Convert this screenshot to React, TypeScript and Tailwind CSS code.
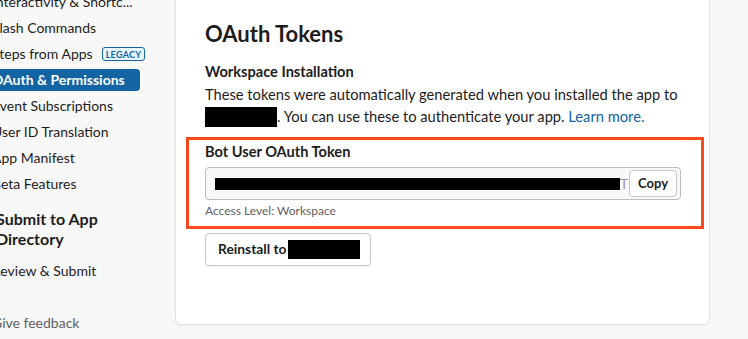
import React from 'react';

const navItems = [
  { label: 'Interactivity & Shortc...' },
  { label: 'Slash Commands' },
  { label: 'Steps from Apps', legacy: true },
  { label: 'OAuth & Permissions', active: true },
  { label: 'Event Subscriptions' },
  { label: 'User ID Translation' },
  { label: 'App Manifest' },
  { label: 'Beta Features' },
];

function Sidebar() {
  return (
    <nav className="w-[175px] shrink-0 -mt-[9px]">
      <div className="-ml-[20px] w-[160px]">
        {navItems.map((item) => (
          <div
            key={item.label}
            className={
              item.active
                ? 'mb-[4px] flex h-[22px] items-center whitespace-nowrap rounded-[4px] bg-[#1264a3] pl-[12px] text-[14px] font-bold leading-[22px] text-white'
                : 'mb-[4px] flex h-[22px] items-center whitespace-nowrap pl-[12px] text-[14px] leading-[22px]'
            }
          >
            <span>{item.label}</span>
            {item.legacy && (
              <span className="ml-[9px] flex h-[14px] items-center rounded-[3px] border border-[#1264a3] bg-[#e8f5fa] px-[3px] text-[9px] font-bold leading-none tracking-[0.3px] text-[#1264a3]">
                LEGACY
              </span>
            )}
          </div>
        ))}
        <div className="mt-[14px] pl-[16px] text-[16px] font-bold leading-[20px]">
          Submit to App
          <br />
          Directory
        </div>
        <div className="mt-[11px] h-[22px] whitespace-nowrap pl-[12px] text-[14px] leading-[22px]">
          Review &amp; Submit
        </div>
        <div className="mt-[30px] h-[22px] whitespace-nowrap pl-[12px] text-[14px] leading-[22px] text-[#616061]">
          Give feedback
        </div>
      </div>
    </nav>
  );
}

function TokenPanel() {
  return (
    <main className="-mt-[10px] h-[335px] w-[535px] shrink-0 rounded-[6px] border border-[#e2e2e2] bg-white pl-[29px] pr-[28px] pt-[28px] shadow-[0_1px_2px_rgba(0,0,0,0.05)]">
      <h2 className="text-[22px] font-bold leading-[30px]">OAuth Tokens</h2>

      <div className="mt-[12px] text-[14.6px] font-bold leading-[22px]">Workspace Installation</div>
      <p className="whitespace-nowrap text-[14.7px] leading-[22px]">
        These tokens were automatically generated when you installed the app to
        <br />
        <span className="inline-block h-[20px] w-[72px] translate-y-[2px] bg-black align-top" />
        . You can use these to authenticate your app.{' '}
        <span className="text-[#1264a3]">Learn more.</span>
      </p>

      <section className="-ml-[19px] -mr-[23px] mt-[10px] border-[3px] border-[#f94a1b] pb-[7px] pl-[16px] pr-[20px] pt-[1px]">
        <div className="text-[14.6px] font-bold leading-[22px]">Bot User OAuth Token</div>
        <div className="mt-[4px] flex h-[33px] items-center rounded-[4px] border border-[#bcbcbc] bg-[#f8f8f8] pl-[9px] pr-[3px]">
          <span className="h-[12px] w-[405px] bg-black" />
          <span className="text-[14px] leading-none text-[#9a999a]">T</span>
          <button className="ml-auto flex h-[27px] w-[48px] items-center justify-center rounded-[4px] border border-[#c8c8c8] bg-white text-[13px] font-bold text-[#1d1c1d]">
            Copy
          </button>
        </div>
        <div className="mt-[3px] text-[12px] leading-[16px] text-[#616061]">Access Level: Workspace</div>
      </section>

      <button className="mt-[4px] flex h-[33px] items-center rounded-[4px] border border-[#c8c8c8] bg-white pl-[12px] pr-[10px] text-[13.8px] font-bold text-[#1d1c1d] shadow-[0_1px_1px_rgba(0,0,0,0.05)]">
        Reinstall to
        <span className="ml-[2px] h-[19px] w-[72px] bg-black" />
      </button>
    </main>
  );
}

export default function App() {
  return (
    <div className="flex h-[339px] w-[748px] overflow-hidden bg-[#f8f8f8] font-['Lato',sans-serif] text-[#1d1c1d]">
      <Sidebar />
      <TokenPanel />
    </div>
  );
}
